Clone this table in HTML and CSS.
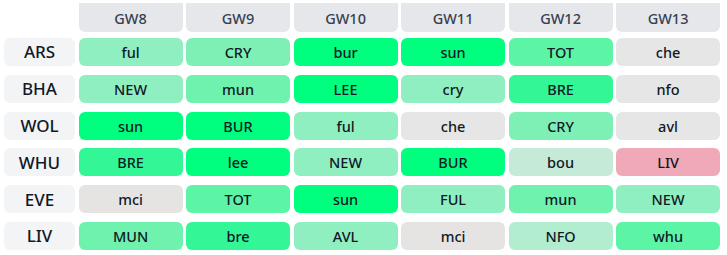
FILE: index.html
```html
<!DOCTYPE html>
<html>
<head>
<meta charset="utf-8">
<link rel="stylesheet" href="styles.css">
</head>
<body>
<div class="grid">
  <div class="corner"></div>
  <div class="head">GW8</div><div class="head">GW9</div><div class="head">GW10</div><div class="head">GW11</div><div class="head">GW12</div><div class="head">GW13</div>

  <div class="team">ARS</div>
  <div class="cell g4">ful</div><div class="cell g5">CRY</div><div class="cell g9">bur</div><div class="cell g9">sun</div><div class="cell g6">TOT</div><div class="cell n">che</div>

  <div class="team">BHA</div>
  <div class="cell g4">NEW</div><div class="cell g5b">mun</div><div class="cell g9">LEE</div><div class="cell g4">cry</div><div class="cell g7">BRE</div><div class="cell n">nfo</div>

  <div class="team">WOL</div>
  <div class="cell g9">sun</div><div class="cell g9">BUR</div><div class="cell g4">ful</div><div class="cell n">che</div><div class="cell g5">CRY</div><div class="cell n">avl</div>

  <div class="team">WHU</div>
  <div class="cell g7">BRE</div><div class="cell g9">lee</div><div class="cell g4">NEW</div><div class="cell g9">BUR</div><div class="cell g2">bou</div><div class="cell bad">LIV</div>

  <div class="team">EVE</div>
  <div class="cell n2">mci</div><div class="cell g6">TOT</div><div class="cell g9">sun</div><div class="cell g4">FUL</div><div class="cell g5b">mun</div><div class="cell g4">NEW</div>

  <div class="team">LIV</div>
  <div class="cell g5b">MUN</div><div class="cell g7">bre</div><div class="cell g4">AVL</div><div class="cell n2">mci</div><div class="cell g3">NFO</div><div class="cell g6">whu</div>
</div>
</body>
</html>
```

FILE: styles.css
```css
html, body {
  margin: 0;
  padding: 0;
  background: #ffffff;
}

body {
  font-family: "Noto Sans", "Open Sans", sans-serif;
  color: #1f2937;
}

.grid {
  display: grid;
  grid-template-columns: 71px repeat(6, 1fr);
  grid-template-rows: 26px repeat(6, 28px);
  column-gap: 3.6px;
  row-gap: 8.8px;
  padding: 3.2px 7px 0 4px;
  width: 727px;
  box-sizing: border-box;
}

.corner { background: transparent; }

.head {
  background: #e5e7eb;
  border-radius: 0 0 6px 6px;
  display: flex;
  align-items: center;
  justify-content: center;
  font-size: 14.5px;
  font-weight: 500;
  color: #374151;
  margin-bottom: -2.8px;
}

.team {
  background: #f3f4f6;
  border-radius: 6px;
  display: flex;
  align-items: center;
  justify-content: center;
  font-size: 17px;
  font-weight: 500;
  color: #111827;
}

.cell {
  border-radius: 6px;
  display: flex;
  align-items: center;
  justify-content: center;
  font-size: 14.5px;
  font-weight: 500;
  color: #111827;
}

.g9 { background: #00ff7f; }
.g7 { background: #33f797; }
.g6 { background: #5cf5a6; }
.g5b { background: #6ef2ae; }
.g5 { background: #7ef0b6; }
.g4 { background: #90efc0; }
.g3 { background: #b2edcf; }
.g2 { background: #c5ead7; }
.n { background: #e6e6e6; }
.n2 { background: #e6e3e3; }
.bad { background: #f0a9b8; }
```
